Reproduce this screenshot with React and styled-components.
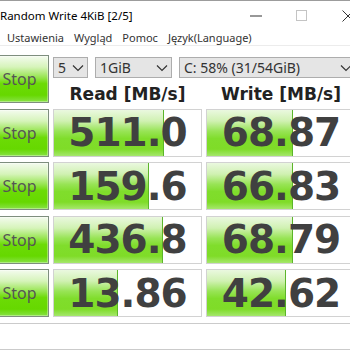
import React from 'react';
import styled, { createGlobalStyle } from 'styled-components';

const Global = createGlobalStyle`
  html, body { margin: 0; padding: 0; background: #fff; overflow: hidden; }
  body { width: 350px; height: 350px; }
`;

const Screen = styled.div`
  width: 350px;
  height: 350px;
  overflow: hidden;
`;

const Window = styled.div`
  width: 381px;
  height: 350px;
  margin-left: -10px;
  box-sizing: border-box;
  border-top: 1px solid #9c9c9c;
  background: #fff;
  display: flex;
  flex-direction: column;
  font-family: "Noto Sans", "Open Sans", sans-serif;
`;

const TitleBar = styled.div`
  height: 29px;
  display: flex;
  align-items: center;
`;

const Title = styled.div`
  flex: 1;
  padding-left: 10px;
  font-size: 11.5px;
  color: #000;
  white-space: nowrap;
`;

const Ctrl = styled.div`
  width: 46px;
  height: 29px;
  display: flex;
  align-items: center;
  justify-content: center;
`;

const MenuBar = styled.div`
  height: 15px;
  display: flex;
  align-items: center;
  gap: 10px;
  padding-left: 17px;
  border-bottom: 1px solid #ececec;
  font-size: 11px;
  color: #333;
`;

const MenuItem = styled.span`
  white-space: nowrap;
`;

const Board = styled.div`
  margin-top: 9px;
  display: grid;
  grid-template-columns: 59px 149px 150px;
  grid-auto-rows: 48px;
  column-gap: 4px;
  row-gap: 5.5px;
`;

const StopButton = styled.div`
  box-sizing: border-box;
  border: 1px solid #7e8e7e;
  background: linear-gradient(to bottom, #f4fbef 0%, #d6f4ba 24%, #98e552 46%, #6cdb06 60%, #66d800 85%, #88e246 100%);
  box-shadow: inset 0 0 0 1px rgba(255,255,255,0.35);
  display: flex;
  align-items: center;
  justify-content: center;
  font-size: 16px;
  color: #555;
`;

const HeaderCell = styled.div`
  grid-column: 2 / 4;
  display: grid;
  grid-template-columns: 149px 150px;
  grid-template-rows: 21px 1fr;
  column-gap: 4px;
  padding-top: 2px;
`;

const SelectRow = styled.div`
  grid-column: 1 / 3;
  display: flex;
  gap: 7px;
`;

const Select = styled.div`
  box-sizing: border-box;
  width: ${p => p.$w};
  flex: ${p => (p.$grow ? '1' : 'none')};
  height: 21px;
  border: 1px solid #adadad;
  background: #e5e5e5;
  display: flex;
  align-items: center;
  justify-content: space-between;
  padding: 0 3px 0 4px;
  font-size: 14px;
  color: #333;
  white-space: nowrap;
`;

const ColHead = styled.div`
  align-self: end;
  text-align: center;
  font-family: "DejaVu Sans", Verdana, sans-serif;
  font-weight: bold;
  font-size: 17px;
  line-height: 18px;
  color: #222;
  white-space: nowrap;
`;

const Meter = styled.div`
  position: relative;
  box-sizing: border-box;
  border: 1px solid #d2d2d2;
  background: #fff;
  display: flex;
  align-items: center;
  justify-content: center;
  overflow: hidden;
`;

const Fill = styled.div`
  position: absolute;
  left: 0;
  top: 0;
  bottom: 0;
  border-right: 1px solid #5cb52a;
  background: linear-gradient(to bottom, #eaf8df 0%, #d0f1b2 24%, #98e456 46%, #80dd2c 62%, #7fdc28 85%, #a5e76c 100%);
`;

const Value = styled.span`
  position: relative;
  font-family: "DejaVu Sans", Verdana, sans-serif;
  font-weight: bold;
  font-size: 39px;
  letter-spacing: -1px;
  line-height: 1;
  color: #404040;
`;

const Comment = styled.div`
  margin-top: 6px;
  flex: 1;
  border: 1px solid #cbcbcb;
  background: #fff;
`;

const Chevron = () => (
  <svg width="12" height="8" viewBox="0 0 12 8">
    <path d="M1 1.5 L6 6.5 L11 1.5" fill="none" stroke="#333" strokeWidth="1.2" />
  </svg>
);

const rows = [
  { read: '511.0', rw: 74.1, write: '68.87', ww: 57.4 },
  { read: '159.6', rw: 63.9, write: '66.83', ww: 57.4 },
  { read: '436.8', rw: 73.5, write: '68.79', ww: 57.4 },
  { read: '13.86', rw: 42.9, write: '42.62', ww: 52.7 },
];

export default function App() {
  return (
    <Screen>
      <Global />
      <Window>
        <TitleBar>
          <Title>Random Write 4KiB [2/5]</Title>
          <Ctrl>
            <svg width="12" height="2" viewBox="0 0 12 2"><rect x="0" y="0.5" width="12" height="1" fill="#333" /></svg>
          </Ctrl>
          <Ctrl>
            <svg width="12" height="12" viewBox="0 0 12 12"><rect x="0.5" y="0.5" width="10" height="10" fill="none" stroke="#c4c4c4" /></svg>
          </Ctrl>
          <Ctrl>
            <svg width="12" height="12" viewBox="0 0 12 12"><path d="M0.5 0.5 L11.5 11.5 M11.5 0.5 L0.5 11.5" stroke="#333" strokeWidth="1" /></svg>
          </Ctrl>
        </TitleBar>
        <MenuBar>
          <MenuItem>Ustawienia</MenuItem>
          <MenuItem>Wygląd</MenuItem>
          <MenuItem>Pomoc</MenuItem>
          <MenuItem>Język(Language)</MenuItem>
        </MenuBar>
        <Board>
          <StopButton>Stop</StopButton>
          <HeaderCell>
            <SelectRow>
              <Select $w="35px">5<Chevron /></Select>
              <Select $w="77px">1GiB<Chevron /></Select>
              <Select $grow>C: 58% (31/54GiB)<Chevron /></Select>
            </SelectRow>
            <ColHead>Read [MB/s]</ColHead>
            <ColHead>Write [MB/s]</ColHead>
          </HeaderCell>
          {rows.map((r, i) => (
            <React.Fragment key={i}>
              <StopButton>Stop</StopButton>
              <Meter>
                <Fill style={{ width: `${r.rw}%` }} />
                <Value>{r.read}</Value>
              </Meter>
              <Meter>
                <Fill style={{ width: `${r.ww}%` }} />
                <Value>{r.write}</Value>
              </Meter>
            </React.Fragment>
          ))}
        </Board>
        <Comment />
      </Window>
    </Screen>
  );
}
